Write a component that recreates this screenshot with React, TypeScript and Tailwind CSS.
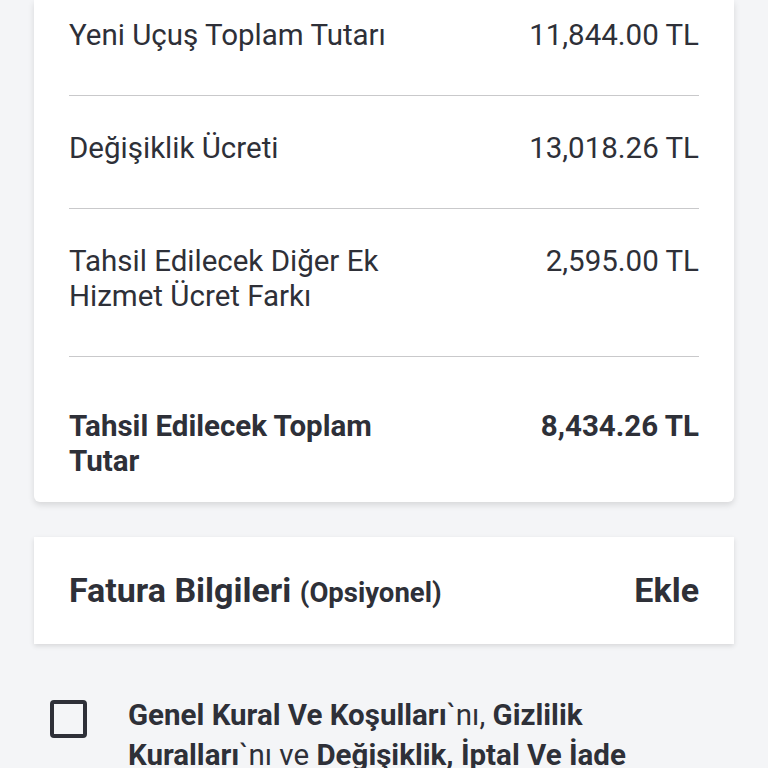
import React from 'react'

type Row = { label: string; value: string; bold?: boolean }

const rows: Row[] = [
  { label: 'Yeni Uçuş Toplam Tutarı', value: '11,844.00 TL' },
  { label: 'Değişiklik Ücreti', value: '13,018.26 TL' },
  { label: 'Tahsil Edilecek Diğer Ek Hizmet Ücret Farkı', value: '2,595.00 TL' },
  { label: 'Tahsil Edilecek Toplam Tutar', value: '8,434.26 TL', bold: true },
]

export default function App() {
  return (
    <div
      className="w-[768px] h-[768px] overflow-hidden bg-[#f4f5f7] text-[#2e3038]"
      style={{ fontFamily: 'Roboto, "Noto Sans", sans-serif' }}
    >
      {/* price summary card */}
      <div className="mx-[34px] bg-white rounded-b-md shadow-[0_3px_6px_rgba(0,0,0,0.12)] px-[35px] pb-[23px]">
        {rows.map((row, i) => (
          <div
            key={row.label}
            className={`flex justify-between gap-6 text-[29.5px] leading-[35px] ${
              i === 0 ? 'pt-[18px] pb-[42px]' : row.bold ? 'pt-[52px]' : 'pt-[35px] pb-[42px]'
            } ${i < rows.length - 1 ? 'border-b border-[#c9c9cb]' : ''} ${row.bold ? 'font-bold' : ''}`}
          >
            <span className="max-w-[345px]">{row.label}</span>
            <span className="whitespace-nowrap shrink-0">{row.value}</span>
          </div>
        ))}
      </div>

      {/* invoice card */}
      <div className="mx-[34px] mt-[35px] h-[107px] bg-white shadow-[0_2px_5px_rgba(0,0,0,0.12)] px-[35px] flex items-center justify-between">
        <div className="font-bold text-[34px]">
          Fatura Bilgileri <span className="text-[27.5px]">(Opsiyonel)</span>
        </div>
        <div className="font-bold text-[34px]">Ekle</div>
      </div>

      {/* agreement */}
      <div className="flex gap-[41px] pl-[50px] pr-[60px] mt-[51px]">
        <div className="mt-[5px] w-[37px] h-[38px] shrink-0 rounded-[4px] border-[4px] border-[#2e3038]" />
        <p className="text-[29.5px] leading-[40px]">
          <b>Genel Kural Ve Koşulları</b>`nı, <b>Gizlilik Kuralları</b>`nı ve{' '}
          <b>Değişiklik, İptal Ve İade Kuralları</b>`nı okudum, kabul ediyorum.
        </p>
      </div>
    </div>
  )
}
